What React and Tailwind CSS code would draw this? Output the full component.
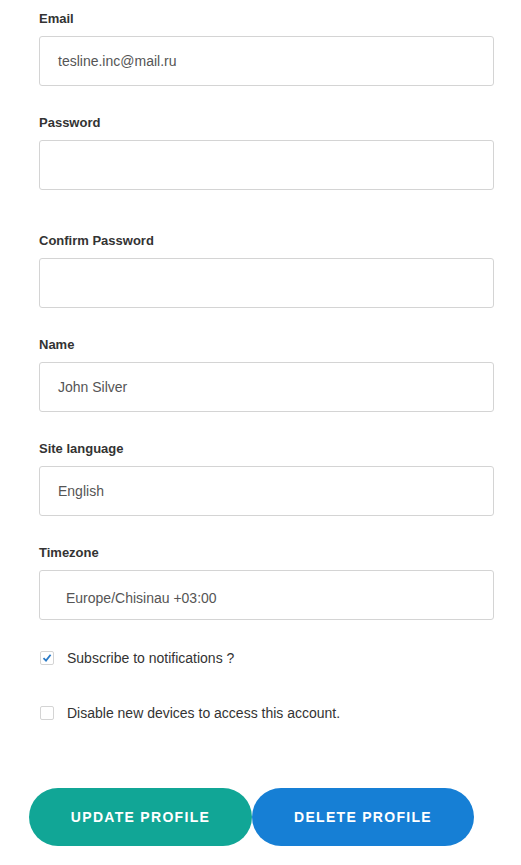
import React from 'react';

const Field = ({ label, value, className = "mt-[26px]", textClass = "pl-[19px]" }) => (
    <div className={className}>
        <label className="block text-[13px] font-bold leading-[20px] text-[#333]">{label}</label>
        <div className={`mt-[7px] h-[50px] w-[455px] rounded-[3px] border border-[#d4d4d4] bg-white flex items-center text-[14px] text-[#555] ${textClass}`}>
            {value}
        </div>
    </div>
);

const Check = ({ checked, label, className }) => (
    <div className={`flex items-center ${className}`}>
        <span className="ml-[1px] flex h-[14px] w-[14px] items-center justify-center rounded-[2px] border border-[#d4d4d4] bg-white">
            {checked && (
                <svg width="10" height="10" viewBox="0 0 10 10">
                    <path d="M1.5 5.2 L4 7.6 L8.6 1.8" fill="none" stroke="#2b7bc7" strokeWidth="1.8" />
                </svg>
            )}
        </span>
        <span className="ml-[13px] text-[14px] leading-[20px] text-[#333]">{label}</span>
    </div>
);

export default function App() {
    return (
        <div className="min-h-[865px] w-[521px] bg-white pl-[39px] pt-[9px]" style={{ fontFamily: '"Liberation Sans", Arial, sans-serif' }}>
            <Field label="Email" value="tesline.inc@mail.ru" className="" textClass="pl-[18px]" />
            <Field label="Password" value="" className="mt-[27px]" />
            <Field label="Confirm Password" value="" className="mt-[41px]" />
            <Field label="Name" value="John Silver" className="mt-[27px]" textClass="pl-[18px]" />
            <Field label="Site language" value="English" className="mt-[27px]" textClass="pl-[18px]" />
            <Field label="Timezone" value="Europe/Chisinau +03:00" className="mt-[27px]" textClass="pl-[26px] pt-[6px]" />
            <Check checked label="Subscribe to notifications ?" className="mt-[28px]" />
            <Check label="Disable new devices to access this account." className="mt-[35px]" />
            <div className="-ml-[10px] mt-[65px] flex">
                <button className="h-[58px] w-[223px] rounded-full bg-[#11a696] text-[14px] font-bold uppercase tracking-[1.3px] text-white">
                    Update Profile
                </button>
                <button className="h-[58px] w-[222px] rounded-full bg-[#167fd5] text-[14px] font-bold uppercase tracking-[1.3px] text-white">
                    Delete Profile
                </button>
            </div>
        </div>
    );
}
